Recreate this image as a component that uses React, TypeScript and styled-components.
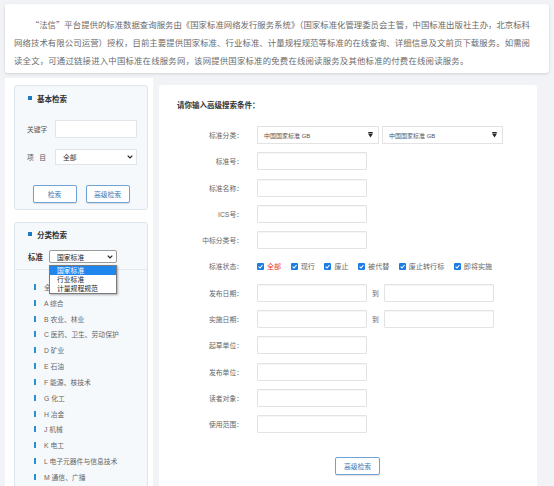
import React from "react";
import styled, { createGlobalStyle } from "styled-components";

const GlobalStyle = createGlobalStyle`
  html, body {
    margin: 0;
    padding: 0;
    height: 486px;
    overflow: hidden;
    background: #f1f3f6;
  }
  body {
    font-family: "Liberation Sans", "Noto Sans CJK SC", sans-serif;
    color: #666;
  }
  * { box-sizing: border-box; }
`;

const introLines = [
  "“法信”平台提供的标准数据查询服务由《国家标准网络发行服务系统》（国家标准化管理委员会主管，中国标准出版社主办，北京标科",
  "网络技术有限公司运营）授权，目前主要提供国家标准、行业标准、计量规程规范等标准的在线查询、详细信息及文前页下载服务。如需阅",
  "读全文，可通过链接进入中国标准在线服务网，该网提供国家标准的免费在线阅读服务及其他标准的付费在线阅读服务。",
];

const categories = [
  "全部",
  "A 综合",
  "B 农业、林业",
  "C 医药、卫生、劳动保护",
  "D 矿业",
  "E 石油",
  "F 能源、核技术",
  "G 化工",
  "H 冶金",
  "J 机械",
  "K 电工",
  "L 电子元器件与信息技术",
  "M 通信、广播",
];

const statuses = [
  { label: "全部", red: true },
  { label: "现行" },
  { label: "废止" },
  { label: "被代替" },
  { label: "废止转行标" },
  { label: "即将实施" },
];

const Check = () => (
  <svg width="7" height="7" viewBox="0 0 7 7">
    <rect x="0" y="0" width="7" height="7" rx="1" fill="#1b7de3" />
    <path d="M1.6 3.7 L3 5 L5.5 2" stroke="#fff" strokeWidth="1.1" fill="none" />
  </svg>
);

const Chevron = () => (
  <svg width="6" height="4" viewBox="0 0 6 4">
    <path d="M0.7 0.7 L3 3 L5.3 0.7" stroke="#222" strokeWidth="1.2" fill="none" />
  </svg>
);

const SortDown = () => (
  <svg width="5" height="6" viewBox="0 0 5 6">
    <rect x="0.3" y="0" width="4.4" height="1" fill="#222" />
    <path d="M0 1.6 L5 1.6 L2.5 5.6 Z" fill="#222" />
  </svg>
);

const App: React.FC = () => {
  return (
    <>
      <GlobalStyle />
      <Page>
        <Intro>
          {introLines.map((line, i) => (
            <IntroLine key={i} $first={i === 0} $last={i === introLines.length - 1}>
              {line}
            </IntroLine>
          ))}
        </Intro>

        <Body>
          <Sidebar>
            <BasicBox>
              <BoxTitle>
                <TitleMark />
                基本检索
              </BoxTitle>
              <SideRow $top={11}>
                <SideLabel>关键字</SideLabel>
                <SideInput type="text" />
              </SideRow>
              <SideRow $top={11}>
                <SideLabel $spread>
                  <span>项</span>
                  <span>目</span>
                </SideLabel>
                <SideSelect>
                  <span>全部</span>
                  <Chevron />
                </SideSelect>
              </SideRow>
              <SideButtons>
                <OutlineButton>检索</OutlineButton>
                <OutlineButton>高级检索</OutlineButton>
              </SideButtons>
            </BasicBox>

            <ClassBox>
              <BoxTitle>
                <TitleMark />
                分类检索
              </BoxTitle>
              <StandardRow>
                <StandardLabel>标准</StandardLabel>
                <DropWrap>
                  <StandardSelect>
                    <span>国家标准</span>
                    <Chevron />
                  </StandardSelect>
                  <DropList>
                    <DropOption $active>国家标准</DropOption>
                    <DropOption>行业标准</DropOption>
                    <DropOption>计量规程规范</DropOption>
                  </DropList>
                </DropWrap>
              </StandardRow>
              <CategoryList>
                {categories.map((c) => (
                  <CategoryItem key={c}>
                    <Bar />
                    {c}
                  </CategoryItem>
                ))}
              </CategoryList>
            </ClassBox>
          </Sidebar>

          <Main>
            <MainTitle>请你输入高级搜索条件：</MainTitle>
            <Form>
              <FormRow>
                <FormLabel>标准分类：</FormLabel>
                <Controls $gap={3}>
                  <CatSelect $width={122}>
                    <span>中国国家标准 GB</span>
                    <SortDown />
                  </CatSelect>
                  <CatSelect $width={121}>
                    <span>中国国家标准 GB</span>
                    <SortDown />
                  </CatSelect>
                </Controls>
              </FormRow>
              <FormRow>
                <FormLabel>标准号：</FormLabel>
                <TextInput type="text" />
              </FormRow>
              <FormRow>
                <FormLabel>标准名称：</FormLabel>
                <TextInput type="text" />
              </FormRow>
              <FormRow>
                <FormLabel>ICS号：</FormLabel>
                <TextInput type="text" />
              </FormRow>
              <FormRow>
                <FormLabel>中标分类号：</FormLabel>
                <TextInput type="text" />
              </FormRow>
              <FormRow>
                <FormLabel>标准状态：</FormLabel>
                <Controls $gap={9.5}>
                  {statuses.map((s) => (
                    <StatusItem key={s.label} $red={s.red}>
                      <Check />
                      {s.label}
                    </StatusItem>
                  ))}
                </Controls>
              </FormRow>
              <FormRow>
                <FormLabel>发布日期：</FormLabel>
                <Controls $gap={4}>
                  <TextInput type="text" />
                  <To>到</To>
                  <TextInput type="text" />
                </Controls>
              </FormRow>
              <FormRow>
                <FormLabel>实施日期：</FormLabel>
                <Controls $gap={4}>
                  <TextInput type="text" />
                  <To>到</To>
                  <TextInput type="text" />
                </Controls>
              </FormRow>
              <FormRow>
                <FormLabel>起草单位：</FormLabel>
                <TextInput type="text" />
              </FormRow>
              <FormRow>
                <FormLabel>发布单位：</FormLabel>
                <TextInput type="text" />
              </FormRow>
              <FormRow>
                <FormLabel>读者对象：</FormLabel>
                <TextInput type="text" />
              </FormRow>
              <FormRow>
                <FormLabel>使用范围：</FormLabel>
                <TextInput type="text" />
              </FormRow>
            </Form>
            <SubmitRow>
              <OutlineButton $wide>高级检索</OutlineButton>
            </SubmitRow>
          </Main>
        </Body>
      </Page>
    </>
  );
};

export default App;

const Page = styled.div`
  padding: 4px 5px 0 5px;
`;

/* top intro card */
const Intro = styled.div`
  background: #fff;
  border-radius: 3px;
  box-shadow: 0 1px 3px rgba(0, 0, 0, 0.14);
  height: 69px;
  padding: 11px 19px 0 9px;
  font-family: "Noto Sans CJK SC", sans-serif;
  font-size: 8.4px;
  line-height: 18px;
  color: #6b6b6b;
`;

const IntroLine = styled.div<{ $first?: boolean; $last?: boolean }>`
  white-space: nowrap;
  text-align: justify;
  text-align-last: ${(p) => (p.$last ? "left" : "justify")};
  text-indent: ${(p) => (p.$first ? "2em" : "0")};
  letter-spacing: ${(p) => (p.$last ? "0.2px" : "0")};
`;

const Body = styled.div`
  display: flex;
  align-items: flex-start;
  gap: 6px;
  margin: 5px 12px 0 0;
`;

/* left column */
const Sidebar = styled.div`
  width: 148px;
  height: 420px;
  flex-shrink: 0;
  background: #fff;
  padding: 7px 5px 0 9px;
`;

const BasicBox = styled.div`
  height: 125px;
  background: #f5f9fc;
  border: 1px solid #dce6ee;
  border-radius: 3px;
  padding: 0 10px 0 12px;
  display: flex;
  flex-direction: column;
`;

const ClassBox = styled.div`
  margin-top: 12px;
  height: 300px;
  background: #f5f9fc;
  border: 1px solid #dce6ee;
  border-radius: 3px;
`;

const BoxTitle = styled.div`
  display: flex;
  align-items: center;
  gap: 5px;
  height: 23px;
  padding: 1px 0 0 13px;
  margin-left: -12px;
  font-family: "Noto Sans CJK SC", sans-serif;
  font-size: 7.5px;
  font-weight: bold;
  color: #333;

  ${ClassBox} & {
    margin-left: 0;
    height: 21px;
  }
`;

const TitleMark = styled.span`
  width: 4px;
  height: 4px;
  background: #1d78c1;
`;

const SideRow = styled.div<{ $top: number }>`
  display: flex;
  align-items: center;
  margin-top: ${(p) => p.$top}px;
`;

const SideLabel = styled.div<{ $spread?: boolean }>`
  width: 28px;
  font-size: 6.8px;
  color: #555;
  display: flex;
  justify-content: ${(p) => (p.$spread ? "space-between" : "flex-start")};
  padding-right: ${(p) => (p.$spread ? "9px" : "0")};
`;

const SideInput = styled.input`
  width: 82px;
  height: 18px;
  border: 1px solid #e1e4e8;
  border-radius: 1px;
  background: #fff;
  outline: none;
`;

const SideSelect = styled.div`
  width: 82px;
  height: 16px;
  border: 1px solid #e1e4e8;
  background: #fff;
  display: flex;
  align-items: center;
  justify-content: space-between;
  padding: 0 3px 0 7px;
  font-size: 6.8px;
  color: #333;
`;

const SideButtons = styled.div`
  display: flex;
  justify-content: center;
  gap: 9px;
  margin-top: 20px;
  padding-right: 2px;
`;

const OutlineButton = styled.button<{ $wide?: boolean }>`
  width: ${(p) => (p.$wide ? "45px" : "44px")};
  height: 18px;
  padding: 0;
  background: #fff;
  border: 1px solid #6fa3d6;
  border-radius: 2px;
  box-shadow: 0 1px 1px rgba(0, 0, 0, 0.12);
  font-family: "Noto Sans CJK SC", sans-serif;
  font-size: 6.8px;
  color: #3c78b4;
`;

const StandardRow = styled.div`
  display: flex;
  align-items: center;
  padding: 6px 0 6px 13px;
  border-bottom: 1px solid #e3e9ef;
`;

const StandardLabel = styled.div`
  width: 21px;
  font-family: "Noto Sans CJK SC", sans-serif;
  font-size: 7.5px;
  font-weight: bold;
  color: #333;
`;

const DropWrap = styled.div`
  position: relative;
`;

const StandardSelect = styled.div`
  width: 68px;
  height: 13px;
  border: 1px solid #9a9a9a;
  border-radius: 2px;
  background: #fff;
  display: flex;
  align-items: center;
  justify-content: space-between;
  padding: 0 3px 0 7px;
  font-size: 6.8px;
  color: #222;
`;

const DropList = styled.div`
  position: absolute;
  top: 15px;
  left: 0;
  width: 68px;
  background: #fff;
  border: 1px solid #7a7a7a;
  box-shadow: 1px 1px 2px rgba(0, 0, 0, 0.3);
  z-index: 5;
`;

const DropOption = styled.div<{ $active?: boolean }>`
  height: 9px;
  line-height: 9px;
  padding-left: 7px;
  font-size: 6.8px;
  color: ${(p) => (p.$active ? "#fff" : "#222")};
  background: ${(p) => (p.$active ? "#1f86ee" : "transparent")};
`;

const CategoryList = styled.div`
  padding: 9px 0 0 19px;
`;

const CategoryItem = styled.div`
  display: flex;
  align-items: center;
  gap: 8px;
  height: 15.83px;
  font-size: 6.8px;
  color: #666;
`;

const Bar = styled.span`
  width: 2px;
  height: 6px;
  background: #2b8fd4;
`;

/* right panel */
const Main = styled.div`
  flex: 1;
  height: 420px;
  margin-top: 7px;
  background: #fff;
  border-radius: 3px;
  padding: 15px 0 0 18px;
`;

const MainTitle = styled.div`
  font-family: "Noto Sans CJK SC", sans-serif;
  font-size: 7.5px;
  font-weight: bold;
  color: #333;
  height: 9px;
  line-height: 9px;
`;

const Form = styled.div`
  display: flex;
  flex-direction: column;
  gap: 8.3px;
  margin-top: 17px;
`;

const FormRow = styled.div`
  display: flex;
  align-items: center;
  height: 18px;
`;

const FormLabel = styled.div`
  width: 66px;
  margin-right: 14px;
  text-align: right;
  font-size: 6.8px;
  color: #666;
`;

const Controls = styled.div<{ $gap: number }>`
  display: flex;
  align-items: center;
  gap: ${(p) => p.$gap}px;
`;

const TextInput = styled.input`
  width: 110px;
  height: 18px;
  border: 1px solid #e3e3e3;
  border-radius: 1px;
  box-shadow: inset 0 1px 1px rgba(0, 0, 0, 0.04);
  background: #fff;
  outline: none;
`;

const CatSelect = styled.div<{ $width: number }>`
  width: ${(p) => p.$width}px;
  height: 18px;
  border: 1px solid #e3e3e3;
  background: #fff;
  display: flex;
  align-items: center;
  justify-content: space-between;
  padding: 0 5px 0 6px;
  font-size: 6px;
  color: #555;
`;

const StatusItem = styled.label<{ $red?: boolean }>`
  display: flex;
  align-items: center;
  gap: 3px;
  font-size: 7.1px;
  color: ${(p) => (p.$red ? "#e53935" : "#666")};
`;

const To = styled.span`
  font-size: 6.8px;
  color: #666;
  padding: 0 1px;
`;

const SubmitRow = styled.div`
  margin-top: 22px;
  padding-left: 158px;
`;
